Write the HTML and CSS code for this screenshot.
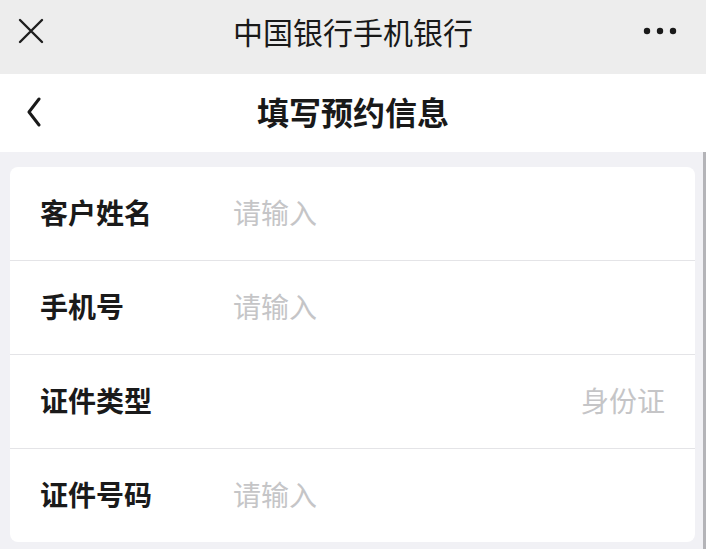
FILE: index.html
```html
<!DOCTYPE html>
<html lang="zh-CN">
<head>
<meta charset="utf-8">
<title>填写预约信息</title>
<link rel="stylesheet" href="styles.css">
</head>
<body>
<div class="page">
  <header class="topbar">
    <svg class="icon-close" width="28" height="28" viewBox="0 0 28 28"><path d="M3 3 L25 25 M25 3 L3 25" stroke="#1e1e1e" stroke-width="2.4" stroke-linecap="round" fill="none"/></svg>
    <div class="topbar-title">中国银行手机银行</div>
    <svg class="icon-more" width="34" height="10" viewBox="0 0 34 10"><circle cx="4" cy="5" r="3.2" fill="#1a1a1a"/><circle cx="17" cy="5" r="3.2" fill="#1a1a1a"/><circle cx="30" cy="5" r="3.2" fill="#1a1a1a"/></svg>
  </header>
  <nav class="navbar">
    <svg class="icon-back" width="16" height="30" viewBox="0 0 16 30"><path d="M13 2 L3 15 L13 28" stroke="#1a1a1a" stroke-width="3" stroke-linecap="round" stroke-linejoin="round" fill="none"/></svg>
    <div class="navbar-title">填写预约信息</div>
  </nav>
  <main class="content">
    <div class="card">
      <div class="row"><span class="label">客户姓名</span><span class="placeholder">请输入</span></div>
      <div class="row"><span class="label">手机号</span><span class="placeholder">请输入</span></div>
      <div class="row"><span class="label">证件类型</span><span class="value-right">身份证</span></div>
      <div class="row"><span class="label">证件号码</span><span class="placeholder">请输入</span></div>
    </div>
    <div class="scrollbar"></div>
  </main>
</div>
</body>
</html>
```
FILE: styles.css
```css
* { box-sizing: border-box; }
html, body { margin: 0; padding: 0; }
body {
  font-family: "Noto Sans CJK SC", "Noto Sans", sans-serif;
  background: #f1f1f5;
  width: 706px;
  height: 549px;
  overflow: hidden;
}
.page { display: flex; flex-direction: column; height: 549px; }
.topbar {
  height: 74px;
  background: #ededed;
  position: relative;
  display: flex;
  align-items: center;
  justify-content: center;
}
.icon-close { position: absolute; left: 17px; top: 17px; }
.icon-more { position: absolute; left: 643px; top: 26px; }
.topbar-title {
  font-size: 30px;
  color: #191919;
  line-height: 1;
  margin-top: -12px;
}
.navbar {
  height: 78px;
  background: #ffffff;
  position: relative;
  display: flex;
  align-items: center;
  justify-content: center;
}
.icon-back { position: absolute; left: 26px; top: 23px; }
.navbar-title {
  font-size: 32px;
  font-weight: 700;
  color: #191919;
  line-height: 1;
  margin-top: -5px;
}
.content {
  flex: 1;
  position: relative;
  padding: 15px 11px 0 10px;
}
.card {
  background: #ffffff;
  border-radius: 8px;
  overflow: hidden;
}
.row {
  height: 94px;
  display: flex;
  align-items: center;
  padding: 0 30px 4px 30px;
  border-top: 1px solid #e4e4e7;
}
.row:first-child { border-top: none; height: 93px; }
.label {
  width: 193px;
  font-size: 28px;
  font-weight: 700;
  color: #1a1a1a;
}
.placeholder {
  font-size: 28px;
  color: #c5c5c7;
}
.value-right {
  margin-left: auto;
  font-size: 28px;
  color: #c5c5c7;
}
.scrollbar {
  position: absolute;
  right: 0;
  top: 0;
  width: 3px;
  height: 397px;
  background: #b4b4b8;
}
```
